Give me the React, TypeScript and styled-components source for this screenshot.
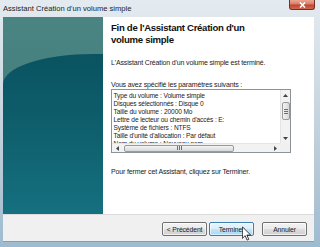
import React from "react";
import styled, { createGlobalStyle } from "styled-components";

const GlobalStyle = createGlobalStyle`
  html, body { margin: 0; padding: 0; }
  body { width: 320px; height: 247px; overflow: hidden; background: #a9c0d0; }
`;

const Window = styled.div`
  position: relative;
  width: 320px;
  height: 247px;
  display: flex;
  flex-direction: column;
  background: linear-gradient(180deg, #e4ebf0 0%, #d2dde5 30%, #b2c6d4 75%, #9dbbd0 100%);
  font-family: "Liberation Sans", Arial, sans-serif;
  overflow: hidden;
`;

const TitleBar = styled.div`
  height: 17px;
  flex: none;
  display: flex;
  align-items: flex-start;
  padding-left: 3px;
`;

const TitleText = styled.span`
  font-size: 7.6px;
  line-height: 17px;
  color: #1b1b1b;
  white-space: nowrap;
`;

const CloseButton = styled.div`
  margin-left: auto;
  margin-right: 5px;
  width: 26px;
  height: 10px;
  box-sizing: border-box;
  border: 1px solid #7c2d22;
  border-top: none;
  border-radius: 0 0 3px 3px;
  background: linear-gradient(180deg, #e9a794 0%, #d7806c 45%, #c3412f 55%, #cf6a4e 100%);
  display: flex;
  align-items: center;
  justify-content: center;
`;

const Client = styled.div`
  flex: none;
  margin: 0 6px 0 3px;
  height: 225px;
  display: flex;
  flex-direction: column;
`;

const ContentRow = styled.div`
  height: 197px;
  display: flex;
`;

const SidePanel = styled.div`
  position: relative;
  width: 100px;
  flex: none;
  background: linear-gradient(180deg, #4a8583 0%, #3e7876 100%);
  overflow: hidden;
  &::after {
    content: "";
    position: absolute;
    top: 37px;
    left: 0;
    right: -60px;
    bottom: 0;
    border-top-left-radius: 90px 30px;
    background: linear-gradient(180deg, #0a5361 0%, #0e5d6b 40%, #15707f 100%);
  }
`;

const Main = styled.div`
  flex: 1;
  background: #ffffff;
  padding: 4.5px 0 0 8px;
  display: flex;
  flex-direction: column;
  color: #1a1a1a;
`;

const Heading = styled.h1`
  margin: 0;
  font-size: 9.6px;
  line-height: 12px;
  letter-spacing: -0.3px;
  font-weight: bold;
  color: #111;
  width: 165px;
`;

const Para = styled.p<{ $gap: number }>`
  margin: ${(p) => p.$gap}px 0 0 0;
  font-size: 7px;
  line-height: 9px;
  letter-spacing: -0.15px;
  white-space: nowrap;
`;

const ListBox = styled.div`
  margin-top: 0.5px;
  width: 180px;
  height: 64px;
  box-sizing: border-box;
  border: 1px solid #8d9299;
  display: grid;
  grid-template-columns: 1fr 10px;
  grid-template-rows: 1fr 9px;
  background: #fff;
`;

const ListText = styled.div`
  overflow: hidden;
  padding: 2px 0 0 1.5px;
  font-size: 6.6px;
  letter-spacing: -0.12px;
  line-height: 8px;
  white-space: nowrap;
`;

const VScroll = styled.div`
  background: #f2f2f2;
  border-left: 1px solid #e4e4e4;
  display: flex;
  flex-direction: column;
  align-items: center;
`;

const HScroll = styled.div`
  background: #f2f2f2;
  border-top: 1px solid #e4e4e4;
  display: flex;
  align-items: center;
`;

const Corner = styled.div`
  background: #f0f0f0;
`;

const ArrowBox = styled.div<{ $w: number; $h: number }>`
  width: ${(p) => p.$w}px;
  height: ${(p) => p.$h}px;
  flex: none;
  display: flex;
  align-items: center;
  justify-content: center;
`;

const Spacer = styled.div`
  flex: 1;
`;

const Thumb = styled.div<{ $vertical?: boolean }>`
  box-sizing: border-box;
  border: 1px solid #9a9a9a;
  border-radius: 2px;
  width: ${(p) => (p.$vertical ? "8px" : "110px")};
  height: ${(p) => (p.$vertical ? "18px" : "7px")};
  margin: ${(p) => (p.$vertical ? "2px 0 0 0" : "0 0 0 2px")};
  background: ${(p) =>
    p.$vertical
      ? "linear-gradient(90deg, #f3f3f3 0%, #e6e6e6 50%, #d6d6d6 100%)"
      : "linear-gradient(180deg, #f3f3f3 0%, #e6e6e6 50%, #d6d6d6 100%)"};
  display: flex;
  align-items: center;
  justify-content: center;
  gap: 1px;
  flex-direction: ${(p) => (p.$vertical ? "column" : "row")};
`;

const Grip = styled.span<{ $vertical?: boolean }>`
  display: block;
  background: #6f6f6f;
  width: ${(p) => (p.$vertical ? "4px" : "1px")};
  height: ${(p) => (p.$vertical ? "1px" : "4px")};
`;

const Footer = styled.div`
  height: 28px;
  box-sizing: border-box;
  background: #f0f0f0;
  border-top: 1px solid #dcdcdc;
  border-bottom: 1px solid #8e9ba6;
  display: flex;
  justify-content: flex-end;
  align-items: flex-start;
  padding: 7px 7px 0 0;
`;

const Button = styled.div<{ $active?: boolean; $gap: number }>`
  position: relative;
  margin-left: ${(p) => p.$gap}px;
  width: 45px;
  height: 14px;
  box-sizing: border-box;
  border: 1px solid ${(p) => (p.$active ? "#3c7fb1" : "#707070")};
  border-radius: 2px;
  background: ${(p) =>
    p.$active
      ? "linear-gradient(180deg, #eaf6fd 0%, #d9f0fc 48%, #bee6fd 52%, #a7d9f5 100%)"
      : "linear-gradient(180deg, #f2f2f2 0%, #ebebeb 48%, #dddddd 52%, #cfcfcf 100%)"};
  box-shadow: inset 0 0 0 1px ${(p) => (p.$active ? "rgba(255,255,255,0.6)" : "rgba(255,255,255,0.7)")};
  display: flex;
  align-items: center;
  justify-content: center;
  font-size: 6.8px;
  letter-spacing: -0.1px;
  color: #1a1a1a;
  white-space: nowrap;
`;

const Cursor = styled.svg`
  position: absolute;
  left: 32px;
  top: 3px;
`;

const listLines = [
  "Type du volume : Volume simple",
  "Disques sélectionnés : Disque 0",
  "Taille du volume : 20000 Mo",
  "Lettre de lecteur ou chemin d'accès : E:",
  "Système de fichiers : NTFS",
  "Taille d'unité d'allocation : Par défaut",
  "Nom du volume : Nouveau nom",
];

const Tri = ({ dir }: { dir: "up" | "down" | "left" | "right" }) => {
  const pts = {
    up: "0,4 3.5,0 7,4",
    down: "0,0 3.5,4 7,0",
    left: "4,0 0,3.5 4,7",
    right: "0,0 4,3.5 0,7",
  }[dir];
  const vert = dir === "up" || dir === "down";
  return (
    <svg width={vert ? 5 : 3} height={vert ? 3 : 5} viewBox={vert ? "0 0 7 4" : "0 0 4 7"}>
      <polygon points={pts} fill="#404040" />
    </svg>
  );
};

export default function App() {
  return (
    <>
      <GlobalStyle />
      <Window>
        <TitleBar>
          <TitleText>Assistant Création d'un volume simple</TitleText>
          <CloseButton>
            <svg width="7" height="6" viewBox="0 0 7 6">
              <path d="M1 0.5 L6 5.5 M6 0.5 L1 5.5" stroke="#ffffff" strokeWidth="1.6" />
            </svg>
          </CloseButton>
        </TitleBar>
        <Client>
          <ContentRow>
            <SidePanel />
            <Main>
              <Heading>Fin de l'Assistant Création d'un volume simple</Heading>
              <Para $gap={12}>L'Assistant Création d'un volume simple est terminé.</Para>
              <Para $gap={13}>Vous avez spécifié les paramètres suivants :</Para>
              <ListBox>
                <ListText>
                  {listLines.map((l) => (
                    <div key={l}>{l}</div>
                  ))}
                </ListText>
                <VScroll>
                  <ArrowBox $w={9} $h={10}>
                    <Tri dir="up" />
                  </ArrowBox>
                  <Thumb $vertical>
                    <Grip $vertical />
                    <Grip $vertical />
                    <Grip $vertical />
                  </Thumb>
                  <Spacer />
                  <ArrowBox $w={9} $h={10}>
                    <Tri dir="down" />
                  </ArrowBox>
                </VScroll>
                <HScroll>
                  <ArrowBox $w={10} $h={8}>
                    <Tri dir="left" />
                  </ArrowBox>
                  <Thumb>
                    <Grip />
                    <Grip />
                    <Grip />
                  </Thumb>
                  <Spacer />
                  <ArrowBox $w={10} $h={8}>
                    <Tri dir="right" />
                  </ArrowBox>
                </HScroll>
                <Corner />
              </ListBox>
              <Para $gap={13.5}>Pour fermer cet Assistant, cliquez sur Terminer.</Para>
            </Main>
          </ContentRow>
          <Footer>
            <Button $gap={0}>&lt; Précédent</Button>
            <Button $gap={2} $active>
              Terminer
              <Cursor width="9" height="15" viewBox="0 0 12 19">
                <path
                  d="M0.5 0.5 L0.5 16 L4.2 12.4 L6.8 18.3 L9 17.3 L6.5 11.6 L11.5 11.6 Z"
                  fill="#ffffff"
                  stroke="#000000"
                  strokeWidth="1"
                  strokeLinejoin="round"
                />
              </Cursor>
            </Button>
            <Button $gap={8}>Annuler</Button>
          </Footer>
        </Client>
      </Window>
    </>
  );
}
